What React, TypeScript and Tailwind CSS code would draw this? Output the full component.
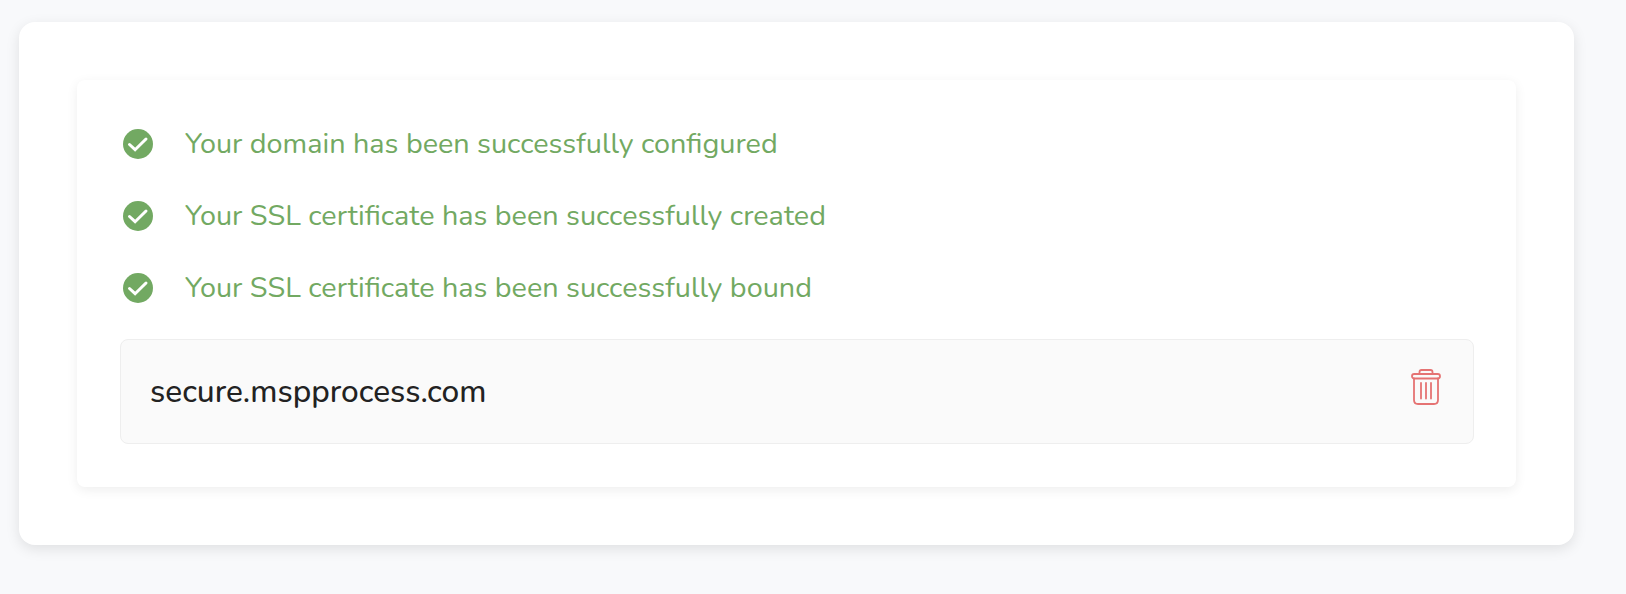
const messages = [
  "Your domain has been successfully configured",
  "Your SSL certificate has been successfully created",
  "Your SSL certificate has been successfully bound",
];

const CheckIcon = () => (
  <svg width="30" height="30" viewBox="0 0 30 30" className="shrink-0">
    <circle cx="15" cy="15" r="15" fill="#72a962" />
    <path d="M6.5 15.5l5.6 5.2L23 10" fill="none" stroke="#fff" strokeWidth="3" strokeLinecap="round" strokeLinejoin="miter" />
  </svg>
);

const TrashIcon = () => (
  <svg width="30" height="36" viewBox="0 0 30 36" fill="none" stroke="#e57373" strokeWidth="1.8" strokeLinecap="round" strokeLinejoin="round" className="mb-[10px]">
    <path d="M8.5 5V3Q8.5 1 10.5 1H19.5Q21.5 1 21.5 3V5" />
    <rect x="1" y="5" width="28" height="4.5" rx="2.25" />
    <path d="M3 9.5V31Q3 35 7 35H23Q27 35 27 31V9.5" />
    <path d="M10 14V29.5M15 14V29.5M20 14V29.5" />
  </svg>
);

export default function App() {
  return (
    <div className="h-[594px] bg-[#f8f9fb] pt-[22px] pl-[19px] pr-[52px] font-['Nunito','Noto_Sans',sans-serif]">
      <div className="h-[523px] rounded-[16px] bg-white pt-[58px] px-[58px] shadow-[0_4px_14px_rgba(0,0,0,0.1)]">
        <div className="h-[407px] rounded-[8px] bg-white pt-[46px] pl-[43px] pr-[42px] shadow-[0_3px_12px_rgba(0,0,0,0.07)]">
          <div className="flex flex-col gap-[36px] pl-[3px]">
            {messages.map((message) => (
              <div key={message} className="flex h-[36px] items-center gap-[32px]">
                <CheckIcon />
                <span className="text-[28.8px] leading-[36px] text-[#72a962]">{message}</span>
              </div>
            ))}
          </div>
          <div className="mt-[33px] flex h-[105px] items-center justify-between rounded-[8px] border border-[#eeeeee] bg-[#fafafa] pl-[29px] pr-[32px]">
            <span className="text-[31.6px] font-medium text-[#222222]">secure.mspprocess.com</span>
            <TrashIcon />
          </div>
        </div>
      </div>
    </div>
  );
}
